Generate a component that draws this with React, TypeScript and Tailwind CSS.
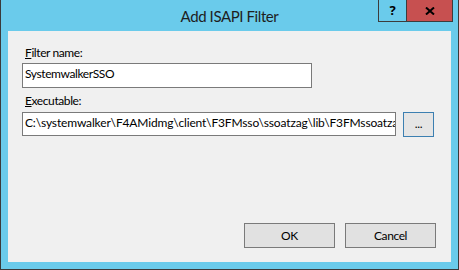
export default function App() {
  return (
    <div className="flex h-[270px] w-[459px] flex-col border-x border-b border-[#3a3a3a] bg-[#6acbeb] font-['Lato','Noto_Sans',sans-serif] text-black">
      {/* Title bar */}
      <div className="relative h-[31px] shrink-0">
        <div className="flex h-full items-center justify-center pt-[1px] text-[15px] leading-5 tracking-[-0.4px] text-[#1e1e1e]">
          Add ISAPI Filter
        </div>
        <div className="absolute right-[5px] top-0 flex border-x border-b border-[#3c3c3c]">
          <div className="flex h-[21px] w-[27px] items-center justify-center font-['Noto_Sans',sans-serif] text-[13px] font-bold leading-none">
            ?
          </div>
          <div className="flex h-[21px] w-[46px] items-center justify-center border-l border-[#3c3c3c] bg-[#c75050]">
            <svg width="10" height="8" viewBox="0 0 10 8">
              <path d="M1 0.5L9 7.5M9 0.5L1 7.5" stroke="#000" strokeWidth="2" />
            </svg>
          </div>
        </div>
      </div>

      {/* Client area */}
      <div className="mx-[7px] mb-[7px] flex flex-1 flex-col bg-[#f0f0f0] pl-[14px] pr-[15px] pt-[14px] pb-[14px] text-[12px] leading-4 tracking-[-0.4px]">
        <div className="pl-[3px]">
          <span className="underline">F</span>ilter name:
        </div>
        <div className="mt-[2px] h-[25px] w-[290px] overflow-hidden whitespace-nowrap border border-[#7a7a7a] bg-white pl-[2px] pt-[2px]">
          SystemwalkerSSO
        </div>

        <div className="mt-[5px] pl-[3px]">
          <span className="underline">E</span>xecutable:
        </div>
        <div className="mt-[3px] flex items-start gap-[7px]">
          <div className="h-[24px] w-[374px] overflow-hidden whitespace-nowrap border border-[#7a7a7a] bg-white pl-[2px] pt-[2px] tracking-[-0.15px]">
            C:\systemwalker\F4AMidmg\client\F3FMsso\ssoatzag\lib\F3FMssoatzag.dll
          </div>
          <button className="flex h-[25px] w-[31px] items-center justify-center border border-[#3c7fb1] bg-[#e5e5e5] pb-[2px] text-[12px]">
            ...
          </button>
        </div>

        <div className="mt-auto flex justify-end gap-[10px]">
          <button className="flex h-[25px] w-[91px] items-center justify-center border border-[#7a7a7a] bg-[#e1e1e1]">
            OK
          </button>
          <button className="flex h-[25px] w-[91px] items-center justify-center border border-[#7a7a7a] bg-[#e1e1e1]">
            Cancel
          </button>
        </div>
      </div>
    </div>
  );
}
